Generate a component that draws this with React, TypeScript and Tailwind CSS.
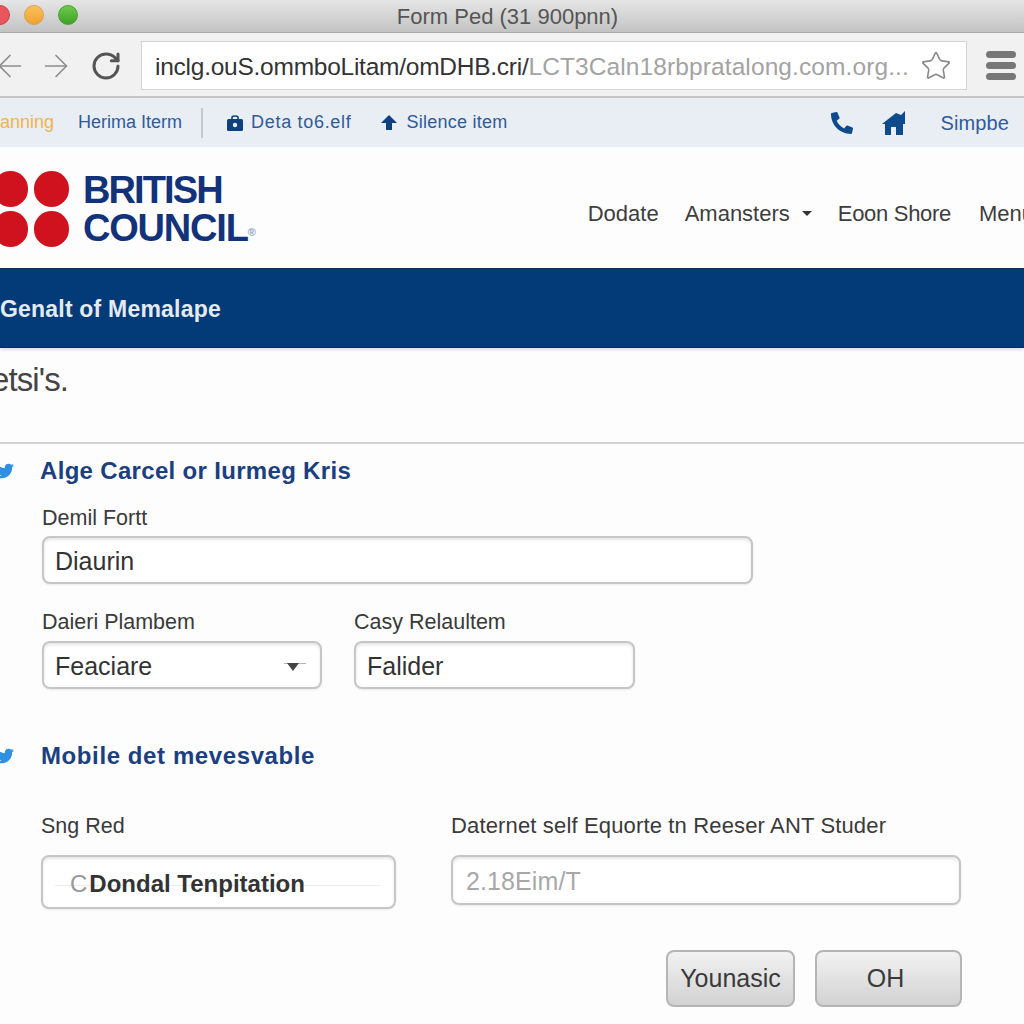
import { ArrowLeft, ArrowRight, RotateCw, Star } from 'lucide-react';
import { FaTwitter, FaPhoneAlt } from 'react-icons/fa';

const font = "font-['Liberation_Sans',Arial,sans-serif]";

function Label({ children, className = 'text-[21.5px]' }: { children: React.ReactNode; className?: string }) {
	return <div className={`leading-[24px] whitespace-nowrap text-[#3a3a3a] ${className}`}>{children}</div>;
}

function Field({ children, className }: { children: React.ReactNode; className: string }) {
	return (
		<div className={`relative flex items-center justify-between rounded-lg border-2 border-[#c6c6c6] bg-white pt-[3px] shadow-[inset_0_2px_3px_rgba(0,0,0,0.1),0_1px_2px_rgba(0,0,0,0.08)] text-[25px] text-[#333] ${className}`}>
			{children}
		</div>
	);
}

function SectionTitle({ children, className, titleClass }: { children: React.ReactNode; className: string; titleClass: string }) {
	return (
		<div className={`flex items-center ${className}`}>
			<FaTwitter className="-ml-[6px] w-[22px] h-[18px] text-[#2f8fe0]" />
			<h2 className={`text-[24px] leading-[28px] font-bold text-[#1c3f80] ${titleClass}`}>{children}</h2>
		</div>
	);
}

export default function App() {
	return (
		<div className={`w-[1024px] h-[1024px] overflow-hidden bg-[#fdfdfd] ${font}`}>
			{/* window title */}
			<div className="relative h-[33px] flex items-center justify-center border-b border-[#a9a9a9] bg-gradient-to-b from-[#e6e6e6] to-[#c3c3c3]">
				<div className="absolute left-[-10px] top-[5px] flex gap-[14px]">
					<span className="w-[20px] h-[20px] rounded-full bg-[#e8555c] border border-[#c9444a]" />
					<span className="w-[20px] h-[20px] rounded-full bg-gradient-to-b from-[#f9c25a] to-[#f0a030] border border-[#d9a050]" />
					<span className="w-[20px] h-[20px] rounded-full bg-gradient-to-b from-[#6ccb4a] to-[#3fa02a] border border-[#4aa12e]" />
				</div>
				<span className="text-[22px] text-[#555] ml-[-9px]">Form Ped (31 900pnn)</span>
			</div>

			{/* toolbar */}
			<div className="h-[65px] flex items-center pt-[2px] bg-[#f1f1f1] border-b-2 border-[#c4c4c4]">
				<ArrowLeft className="shrink-0 -ml-[8px] w-[36px] h-[36px] text-[#8d8d8d]" strokeWidth={1.1} />
				<ArrowRight className="shrink-0 ml-[10px] w-[36px] h-[36px] text-[#8d8d8d]" strokeWidth={1.1} />
				<RotateCw className="shrink-0 ml-[16px] w-[32px] h-[32px] text-[#555]" strokeWidth={2.25} />
				<div className="shrink-0 ml-[19px] w-[826px] h-[49px] flex items-center justify-between pl-[13px] pr-[14px] bg-white border border-[#d4d4d4] text-[24.5px] whitespace-nowrap">
					<span className="pt-[3px] text-[#333] tracking-[-0.25px]">inclg.ouS.ommboLitam/omDHB.cri/<span className="text-[#a3a3a3] tracking-[0.1px]">LCT3Caln18rbpratalong.com.org...</span></span>
					<Star className="w-[32px] h-[32px] text-[#8a8a8a]" strokeWidth={1.2} />
				</div>
				<div className="ml-[19px] flex flex-col gap-[4px]">
					<span className="block w-[30px] h-[7px] rounded-full bg-[#777]" />
					<span className="block w-[30px] h-[7px] rounded-full bg-[#777]" />
					<span className="block w-[30px] h-[7px] rounded-full bg-[#777]" />
				</div>
			</div>

			{/* bookmarks */}
			<div className="h-[49px] flex items-center bg-[#e9eef4] text-[18px] text-[#2f5a9a] whitespace-nowrap">
				<span className="w-[55px] text-[#f0b44c]">anning</span>
				<span className="ml-[23px]">Herima Iterm</span>
				<span className="ml-[19px] w-[2px] h-[30px] bg-[#c5c9ce]" />
				<svg viewBox="0 0 16 16" className="ml-[24px] w-[16px] h-[16px] text-[#0f3f80]">
					<path d="M5 4V2.5C5 1.5 6 1 8 1s3 .5 3 1.5V4" fill="none" stroke="currentColor" strokeWidth="1.6" />
					<rect x="0" y="4" width="16" height="12" rx="1.5" fill="currentColor" />
					<circle cx="8" cy="10" r="2.2" fill="#e9eef4" />
				</svg>
				<span className="ml-[8px] tracking-[0.7px]">Deta to6.elf</span>
				<svg viewBox="0 0 16 16" className="ml-[30px] w-[16px] h-[16px] text-[#0f3f80]">
					<polygon points="8,0 16,8 11,8 11,15 5,15 5,8 0,8" fill="currentColor" />
				</svg>
				<span className="ml-[9px] tracking-[0.25px]">Silence item</span>
				<FaPhoneAlt className="ml-[323px] w-[22px] h-[22px] text-[#0f4a8c]" />
				<svg viewBox="0 0 24 24" className="ml-[29px] w-[24px] h-[24px] text-[#0f4a8c]">
					<path d="M0 13L14 2l5 2 4-4v13h-2v11h-7v-8H9v8H3V13z" fill="currentColor" />
				</svg>
				<span className="ml-[35px] text-[20px] tracking-[0.1px]">Simpbe</span>
			</div>

			{/* site header */}
			<div className="h-[121px] flex items-center justify-between whitespace-nowrap">
				<div className="flex items-center -ml-[7px] mt-[3px]">
					<div className="grid grid-cols-2 gap-x-[6px] gap-y-[4px]">
						<span className="w-[35px] h-[36px] rounded-full bg-[#d0121f]" />
						<span className="w-[35px] h-[36px] rounded-full bg-[#d0121f]" />
						<span className="w-[35px] h-[36px] rounded-full bg-[#d0121f]" />
						<span className="w-[35px] h-[36px] rounded-full bg-[#d0121f]" />
					</div>
					<div className="ml-[14px] text-[38px] leading-[38px] font-bold text-[#12337a]">
						<div className="tracking-[-1.9px]">BRITISH</div>
						<div className="tracking-[-1.2px]">COUNCIL<sup className="text-[11px] text-[#8aa0c0]">®</sup></div>
					</div>
				</div>
				<nav className="flex items-center text-[22px] text-[#3d3d3d] mt-[12px]">
					<span>Dodate</span>
					<span className="ml-[26px]">Amansters</span>
					<span className="ml-[12px] border-x-[5px] border-t-[5px] border-x-transparent border-t-[#333]" />
					<span className="ml-[26px] tracking-[-0.3px]">Eoon Shore</span>
					<span className="ml-[28px] w-[45px] overflow-hidden">Menu</span>
				</nav>
			</div>

			{/* banner */}
			<div className="h-[80px] flex items-center pt-[2px] bg-[#033a78] border-y border-[#0b2c5c] shadow-[0_2px_3px_rgba(0,0,0,0.12)]">
				<span className="text-[23px] tracking-[0.2px] font-bold text-[#e4eaf2]">Genalt of Memalape</span>
			</div>

			{/* page body */}
			<div className="text-[33px] leading-[40px] tracking-[-0.9px] -ml-[9px] mt-[12px] text-[#444]">etsi's.</div>
			<div className="mt-[42px] h-[2px] bg-[#d4d4d4]" />

			<SectionTitle className="mt-[13px]" titleClass="ml-[24px] tracking-[0.32px]">Alge Carcel or Iurmeg Kris</SectionTitle>

			<div className="mt-[21px] ml-[42px]">
				<Label>Demil Fortt</Label>
				<Field className="mt-[6px] w-[711px] h-[48px] pl-[11px]">Diaurin</Field>
			</div>

			<div className="mt-[26px] ml-[42px] flex gap-[32px]">
				<div>
					<Label>Daieri Plambem</Label>
					<Field className="mt-[7px] w-[280px] h-[48px] pl-[11px] pr-[14px]">
						Feaciare
						<svg viewBox="0 0 22 10" className="w-[22px] h-[10px] text-[#444]">
							<path d="M0 1.5h22" stroke="currentColor" strokeOpacity="0.4" strokeWidth="1" />
							<polygon points="3,1 15,1 9,9" fill="currentColor" />
						</svg>
					</Field>
				</div>
				<div>
					<Label>Casy Relaultem</Label>
					<Field className="mt-[7px] w-[281px] h-[48px] pl-[11px]">Falider</Field>
				</div>
			</div>

			<SectionTitle className="mt-[53px]" titleClass="ml-[25px] tracking-[0.6px]">Mobile det mevesvable</SectionTitle>

			<div className="mt-[44px] ml-[41px] flex">
				<div>
					<Label>Sng Red</Label>
					<Field className="mt-[17px] w-[355px] h-[54px] pl-[27px] !justify-start">
						<span className="absolute left-[12px] right-[14px] top-[28px] h-px bg-[#ececec]" />
						<span className="relative font-bold text-[24px]"><span className="font-normal text-[#999] mr-[2px]">C</span>Dondal Tenpitation</span>
					</Field>
				</div>
				<div className="ml-[55px]">
					<Label className="text-[22px] tracking-[0.15px]">Daternet self Equorte tn Reeser ANT Studer</Label>
					<Field className="mt-[17px] w-[510px] h-[50px] pl-[13px] tracking-[0.1px] !text-[#a8a8a8]">2.18Eim/T</Field>
				</div>
			</div>

			<div className="mt-[41px] ml-[666px] flex gap-[20px] text-[25px] text-[#3a3a3a]">
				<button className="w-[129px] h-[57px] rounded-lg border-2 border-[#b5b5b5] bg-gradient-to-b from-[#f2f2f2] to-[#d2d2d2]">Younasic</button>
				<button className="w-[147px] h-[57px] pr-[6px] rounded-lg border-2 border-[#b5b5b5] bg-gradient-to-b from-[#f2f2f2] to-[#d2d2d2]">OH</button>
			</div>
		</div>
	);
}
